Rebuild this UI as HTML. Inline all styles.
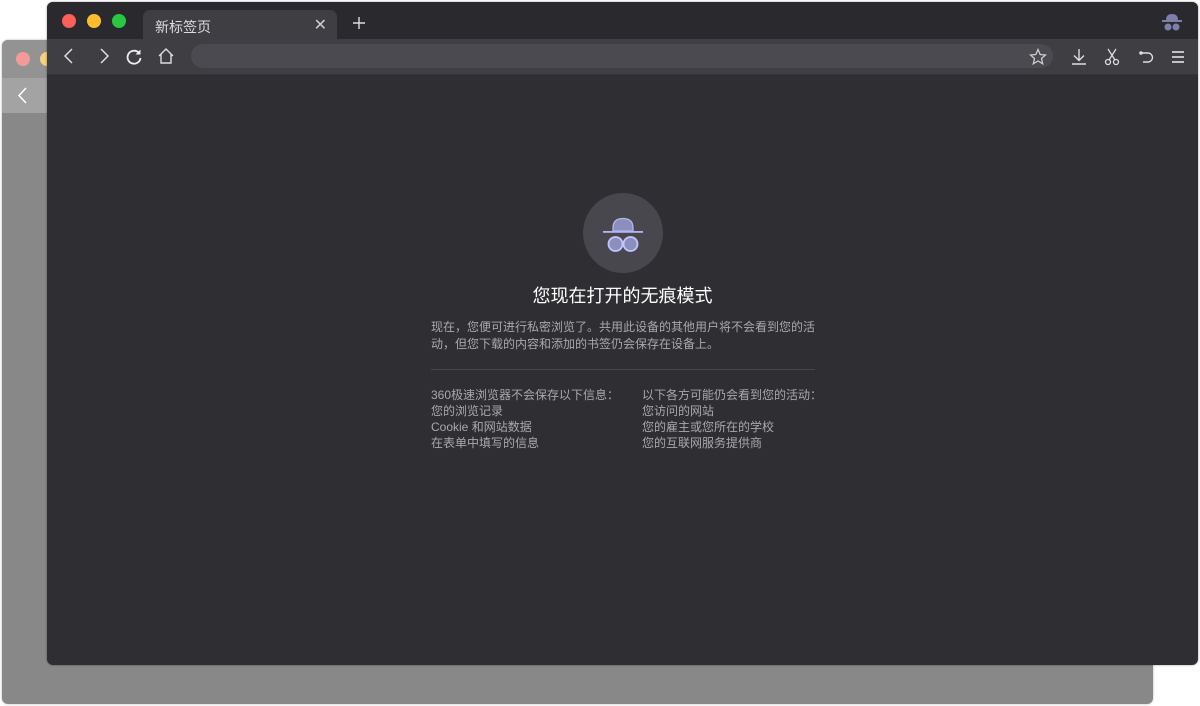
<!DOCTYPE html>
<html><head><meta charset="utf-8"><style>
*{margin:0;padding:0;box-sizing:border-box}
body{width:1200px;height:706px;background:#fff;position:relative;overflow:hidden;font-family:"Liberation Sans","Noto Sans CJK SC",sans-serif}
.back{position:absolute;left:2px;top:40px;width:1151px;height:664px;background:#888;border-radius:6px;overflow:hidden;box-shadow:0 0 2px rgba(0,0,0,.3)}
.back .tb{height:38px;background:#939393}
.back .tl{height:35px;background:#a3a3a3;position:relative}
.front{position:absolute;left:47px;top:2px;width:1151px;height:663px;background:#2f2e33;border-radius:6px;overflow:hidden;box-shadow:0 0 2px rgba(0,0,0,.4)}
.title{height:37px;background:#2a292e;position:relative}
.dot{position:absolute;top:12px;width:14px;height:14px;border-radius:50%}
.tab{position:absolute;left:96px;top:8px;width:194px;height:32px;background:#3f3e43;border-radius:7px 7px 0 0;color:#ddd;font-size:14px;padding:7px 0 0 12px}
.toolbar{height:36px;background:#3f3e43;position:relative;border-bottom:1px solid #333}
.url{position:absolute;left:144px;top:5px;width:862px;height:24px;border-radius:12px;background:#4b4a50}
svg{position:absolute}
.center{position:absolute;left:0;right:0;text-align:center}
.txt{position:absolute;color:#a9a8ad;font-size:12px;line-height:16px}
</style></head><body>
<div class="back"><div class="tb"><div class="dot" style="left:14px;top:12px;background:#f59a98"></div><div class="dot" style="left:38px;top:12px;background:#f5d27f"></div></div><div class="tl"><svg style="left:14px;top:8px" width="14" height="20"><path d="M10 2 L3 9.5 L10 17" stroke="#fff" stroke-width="1.5" fill="none"/></svg></div></div>
<div class="front">
<div class="title">
<div class="dot" style="left:15px;background:#fe5f57"></div>
<div class="dot" style="left:40px;background:#febc2e"></div>
<div class="dot" style="left:65px;background:#28c840"></div>
<div class="tab">新标签页<span style="position:absolute;right:10px;top:5px;font-size:16px;color:#ccc">✕</span></div>
<svg style="left:306px;top:15px" width="12" height="12"><path d="M6 0V12M0 6H12" stroke="#ddd" stroke-width="1.4"/></svg>
<svg style="left:1114px;top:10px" width="22" height="20"><path d="M5 8 Q5 2 11 2 Q17 2 17 8Z" fill="#7d7faa"/><rect x="1" y="8" width="20" height="2" fill="#7d7faa"/><circle cx="7" cy="15" r="3.5" fill="#7d7faa"/><circle cx="15" cy="15" r="3.5" fill="#7d7faa"/></svg>
</div>
<div class="toolbar">
<svg style="left:15px;top:8px" width="14" height="20"><path d="M10 2 L3 9 L10 16" stroke="#ddd" stroke-width="1.5" fill="none"/></svg>
<svg style="left:50px;top:8px" width="14" height="20"><path d="M4 2 L11 9 L4 16" stroke="#ddd" stroke-width="1.5" fill="none"/></svg>
<svg style="left:78px;top:9px" width="18" height="18"><path d="M14 5 A6.5 6.5 0 1 0 15.5 10" stroke="#eee" stroke-width="1.8" fill="none"/><path d="M15.5 1.5V6.5H10.5Z" fill="#eee"/></svg>
<svg style="left:110px;top:8px" width="18" height="18"><path d="M2 9 L9 2 L16 9 M4 7.5V16H14V7.5" stroke="#ddd" stroke-width="1.4" fill="none"/></svg>
<div class="url"></div>
<svg style="left:982px;top:9px" width="18" height="18"><path d="M9 1.5 L11.2 6.5 L16.5 7 L12.5 10.5 L13.7 15.8 L9 13 L4.3 15.8 L5.5 10.5 L1.5 7 L6.8 6.5Z" stroke="#ccc" stroke-width="1.3" fill="none"/></svg>
<svg style="left:1023px;top:9px" width="18" height="18"><path d="M9 1V12M4 7.5L9 12.5L14 7.5M2 16H16" stroke="#ddd" stroke-width="1.4" fill="none"/></svg>
<svg style="left:1056px;top:9px" width="18" height="18"><path d="M5 1L12 12M13 1L6 12" stroke="#ddd" stroke-width="1.3"/><circle cx="5" cy="14" r="2.5" stroke="#ddd" stroke-width="1.3" fill="none"/><circle cx="13" cy="14" r="2.5" stroke="#ddd" stroke-width="1.3" fill="none"/></svg>
<svg style="left:1090px;top:9px" width="18" height="18"><path d="M4 5H11A4.5 4.5 0 0 1 11 14H6" stroke="#ddd" stroke-width="1.4" fill="none"/><circle cx="4" cy="5" r="1.8" fill="#ddd"/></svg>
<svg style="left:1124px;top:11px" width="14" height="14"><path d="M1 2H13M1 7H13M1 12H13" stroke="#eee" stroke-width="1.6"/></svg>
</div>
<div style="position:absolute;left:536px;top:191px;width:80px;height:80px;border-radius:50%;background:#48474d"></div>
<svg style="left:555px;top:214px" width="42" height="40"><path d="M11 12 Q11 2.5 21 2.5 Q31 2.5 31 12V15H11Z" fill="#8c8ebd" stroke="#b3b5f0" stroke-width="1.3"/><rect x="1" y="15" width="40" height="1.8" fill="#b3b5f0"/><circle cx="13.5" cy="28" r="7" fill="#8c8ebd" stroke="#c3c5ff" stroke-width="1.8"/><circle cx="28.5" cy="28" r="7" fill="#8c8ebd" stroke="#c3c5ff" stroke-width="1.8"/></svg>
<div class="center" style="top:280px;color:#fff;font-size:18px">您现在打开的无痕模式</div>
<div class="txt" style="left:384px;top:317px;width:390px;line-height:17px">现在，您便可进行私密浏览了。共用此设备的其他用户将不会看到您的活动，但您下载的内容和添加的书签仍会保存在设备上。</div>
<div style="position:absolute;left:384px;top:367px;width:384px;height:1px;background:#47464b"></div>
<div class="txt" style="left:384px;top:385px">360极速浏览器不会保存以下信息：<br>您的浏览记录<br>Cookie 和网站数据<br>在表单中填写的信息</div>
<div class="txt" style="left:595px;top:385px">以下各方可能仍会看到您的活动：<br>您访问的网站<br>您的雇主或您所在的学校<br>您的互联网服务提供商</div>
</div>
</body></html>
